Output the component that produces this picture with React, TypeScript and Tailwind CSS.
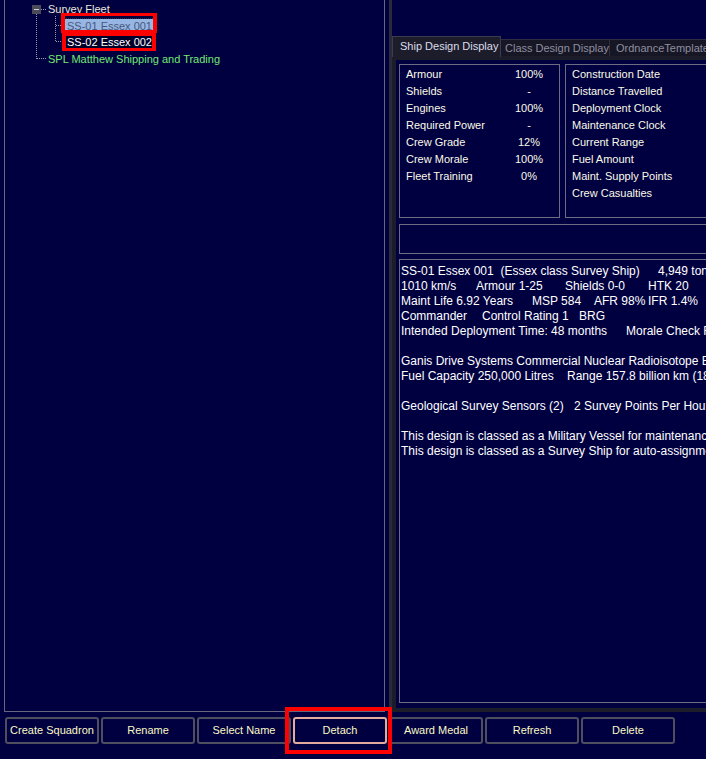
import React from 'react';

const statRows: [string, string][] = [
  ['Armour', '100%'],
  ['Shields', '-'],
  ['Engines', '100%'],
  ['Required Power', '-'],
  ['Crew Grade', '12%'],
  ['Crew Morale', '100%'],
  ['Fleet Training', '0%'],
];

const clockRows = [
  'Construction Date',
  'Distance Travelled',
  'Deployment Clock',
  'Maintenance Clock',
  'Current Range',
  'Fuel Amount',
  'Maint. Supply Points',
  'Crew Casualties',
];

// each line: list of [text, width of the cell] — last cell has no width
const summary: [string, number?][][] = [
  [['SS-01 Essex 001  (Essex class Survey Ship)', 257], ['4,949 tons']],
  [['1010 km/s', 75], ['Armour 1-25', 89], ['Shields 0-0', 83], ['HTK 20']],
  [['Maint Life 6.92 Years', 131], ['MSP 584', 62], ['AFR 98%', 54], ['IFR 1.4%']],
  [['Commander', 81], ['Control Rating 1', 97], ['BRG']],
  [['Intended Deployment Time: 48 months', 225], ['Morale Check Required']],
  [],
  [['Ganis Drive Systems Commercial Nuclear Radioisotope Engine']],
  [['Fuel Capacity 250,000 Litres', 166], ['Range 157.8 billion km (1808 days)']],
  [],
  [['Geological Survey Sensors (2)', 173], ['2 Survey Points Per Hour']],
  [],
  [['This design is classed as a Military Vessel for maintenance purposes']],
  [['This design is classed as a Survey Ship for auto-assignment purposes']],
];

const buttons = ['Create Squadron', 'Rename', 'Select Name', 'Detach', 'Award Medal', 'Refresh', 'Delete'];

// tree connectors, in the panel's own coordinates (panel inner edge sits at page x 5)
const TreeLines = () => (
  <svg className="absolute left-0 top-0" width="120" height="70" shapeRendering="crispEdges">
    <g stroke="#9a9aa6" strokeWidth="1" strokeDasharray="1 1" fill="none">
      <line x1="36" y1="9.5" x2="42" y2="9.5" />
      <line x1="31.5" y1="14" x2="31.5" y2="59" />
      <line x1="32" y1="58.5" x2="42" y2="58.5" />
      <line x1="50.5" y1="16" x2="50.5" y2="42" />
      <line x1="51" y1="25.5" x2="57" y2="25.5" />
      <line x1="51" y1="41.5" x2="57" y2="41.5" />
    </g>
    <rect x="27" y="5" width="9" height="9" fill="#4a4a58" />
    <line x1="29" y1="9.5" x2="34" y2="9.5" stroke="#d0d0d8" />
  </svg>
);

const TreePanel = () => (
  <div className="relative ml-[4px] mr-[4px] h-[712px] w-[381px] shrink-0 border-x border-b border-[#66667e] pt-[1px] text-[11px] leading-[16.6px]">
    <TreeLines />
    <div className="pl-[43px] text-[#e8e8dc]">Survey Fleet</div>
    <div className="pl-[60px]">
      <span className="inline-block h-[13px] bg-[#98b6e4] px-[2px] pt-[2px] leading-[11px] text-[#46587c] outline-1 outline-dotted outline-[#2a2a48]">
        SS-01 Essex 001
      </span>
    </div>
    <div className="pl-[61px]">
      <span className="inline-block h-[12px] bg-[#00002a] px-[1px] pt-[1px] leading-[11px] text-white">SS-02 Essex 002</span>
    </div>
    <div className="pl-[43px] text-[#72e872]">SPL Matthew Shipping and Trading</div>
  </div>
);

const Box = ({ className, children }: { className: string; children?: React.ReactNode }) => (
  <div className={`shrink-0 border border-[#6c6c82] ${className}`}>{children}</div>
);

const ShipDesign = () => (
  <div className="flex h-full flex-col pl-[3px] pt-[4px]">
    <div className="flex">
      <Box className="h-[154px] w-[161px] pt-[1px] text-[11px] leading-[17px] text-[#fbfbe6]">
        {statRows.map(([k, v]) => (
          <div key={k} className="flex">
            <span className="w-[100px] pl-[6px]">{k}</span>
            <span className="w-[58px] text-center">{v}</span>
          </div>
        ))}
      </Box>
      <Box className="ml-[5px] h-[154px] w-[220px] pt-[1px] text-[11px] leading-[17px] text-[#fbfbe6]">
        {clockRows.map((k) => (
          <div key={k} className="pl-[6px]">{k}</div>
        ))}
      </Box>
    </div>
    <Box className="mt-[6px] h-[30px] w-[400px]" />
    <Box className="mt-[5px] h-[444px] w-[400px] overflow-hidden pl-[1px] pt-[4px] text-[12px] leading-[15px] text-white">
      {summary.map((line, i) => (
        <div key={i} className="flex h-[15px] whitespace-pre">
          {line.map(([t, w], j) => (
            <span key={j} className="shrink-0" style={w ? { width: w } : undefined}>
              {t}
            </span>
          ))}
        </div>
      ))}
    </Box>
  </div>
);

const RightPanel = () => (
  <div className="flex h-[712px] w-[400px] shrink-0 flex-col border-l-[3px] border-[#2a2a3a]">
    <div className="h-[36px]" />
    <div className="flex h-[20px] items-end text-[11px]">
      <div className="relative z-10 -mb-[1px] h-[21px] w-[109px] border-x border-t border-[#3c3c50] bg-[#1c1c2a] pl-[7px] leading-[19px] text-[#dcdcea]">
        Ship Design Display
      </div>
      <div className="h-[17px] w-[109px] border-r border-t border-[#2e2e40] bg-[#161624] pl-[4px] leading-[16px] text-[#8e8ea0]">
        Class Design Display
      </div>
      <div className="h-[17px] w-[130px] border-t border-[#2e2e40] bg-[#161624] pl-[6px] leading-[16px] text-[#8e8ea0]">
        OrdnanceTemplate
      </div>
    </div>
    <div className="flex-1 border-[4px] border-[#1c1c2a] bg-[#000040]">
      <ShipDesign />
    </div>
  </div>
);

export default function App() {
  return (
    <div className="relative h-[759px] w-[706px] overflow-hidden bg-[#000040] font-['Liberation_Sans',Arial,sans-serif]">
      <div className="flex">
        <TreePanel />
        <RightPanel />
      </div>
      <div className="flex gap-[2px] pl-[5px] pt-[5px]">
        {buttons.map((b) => (
          <button
            key={b}
            className={`h-[27px] w-[94px] shrink-0 rounded-[3px] border-2 bg-[#000040] text-center text-[11px] text-[#fafac4] ${
              b === 'Detach' ? 'border-[#e4aa9c]' : 'border-[#4e4e5e]'
            }`}
          >
            {b}
          </button>
        ))}
      </div>

      {/* red annotation frames */}
      <div className="absolute left-[61px] top-[13px] h-[20px] w-[96px] border-x-[4px] border-y-[3px] border-[#ff0000]" />
      <div className="absolute left-[62px] top-[33px] h-[18px] w-[94px] border-x-[4px] border-y-[3px] border-[#ff0000]" />
      <div className="absolute left-[285px] top-[707px] h-[47px] w-[107px] border-[4px] border-[#ff0000]" />
    </div>
  );
}
